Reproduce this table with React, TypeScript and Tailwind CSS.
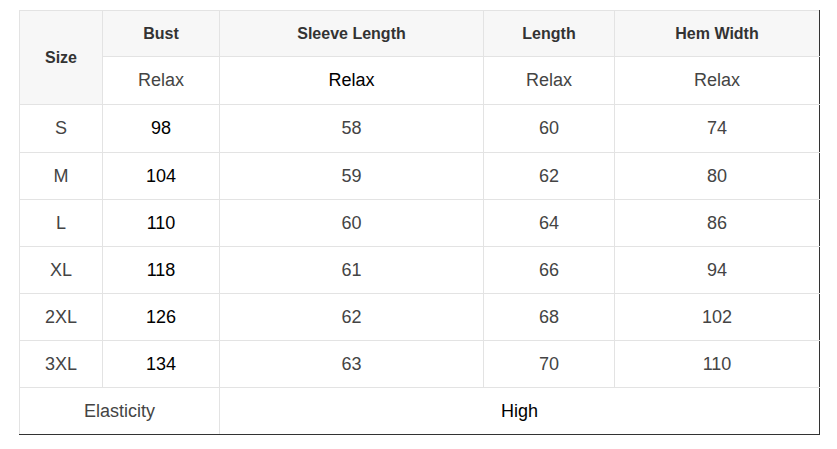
const rows = [
  ['S', '98', '58', '60', '74'],
  ['M', '104', '59', '62', '80'],
  ['L', '110', '60', '64', '86'],
  ['XL', '118', '61', '66', '94'],
  ['2XL', '126', '62', '68', '102'],
  ['3XL', '134', '63', '70', '110'],
];

const cell = 'border border-[#e3e3e3] text-center align-middle p-0';

export default function App() {
  return (
    <div className="min-h-[449px] bg-white pl-[19px] pt-[10px] font-['Liberation_Sans',Arial,sans-serif]">
      <table className="w-[800px] table-fixed border-collapse text-[18px] text-[#444]">
        <colgroup>
          <col className="w-[83px]" />
          <col className="w-[117px]" />
          <col className="w-[264px]" />
          <col className="w-[131px]" />
          <col className="w-[205px]" />
        </colgroup>
        <thead>
          <tr className="h-[46px] text-[16px] font-bold text-[#333]">
            <th rowSpan={2} className={`${cell} bg-[#f7f7f7]`}>Size</th>
            <th className={`${cell} bg-[#f7f7f7]`}>Bust</th>
            <th className={`${cell} bg-[#f7f7f7]`}>Sleeve Length</th>
            <th className={`${cell} bg-[#f7f7f7]`}>Length</th>
            <th className={`${cell} bg-[#f7f7f7] border-r-[#333]`}>Hem Width</th>
          </tr>
          <tr className="h-[48px] font-normal">
            <td className={cell}>Relax</td>
            <td className={`${cell} text-black`}>Relax</td>
            <td className={cell}>Relax</td>
            <td className={`${cell} border-r-[#333]`}>Relax</td>
          </tr>
        </thead>
        <tbody>
          {rows.map((r, i) => (
            <tr key={r[0]} className={i === 0 ? 'h-[48px]' : 'h-[47px]'}>
              <td className={cell}>{r[0]}</td>
              <td className={`${cell} text-black`}>{r[1]}</td>
              <td className={cell}>{r[2]}</td>
              <td className={cell}>{r[3]}</td>
              <td className={`${cell} border-r-[#333]`}>{r[4]}</td>
            </tr>
          ))}
          <tr className="h-[47px]">
            <td colSpan={2} className={`${cell} border-b-[#333]`}>Elasticity</td>
            <td colSpan={3} className={`${cell} border-b-[#333] border-r-[#333] text-black`}>High</td>
          </tr>
        </tbody>
      </table>
    </div>
  );
}
